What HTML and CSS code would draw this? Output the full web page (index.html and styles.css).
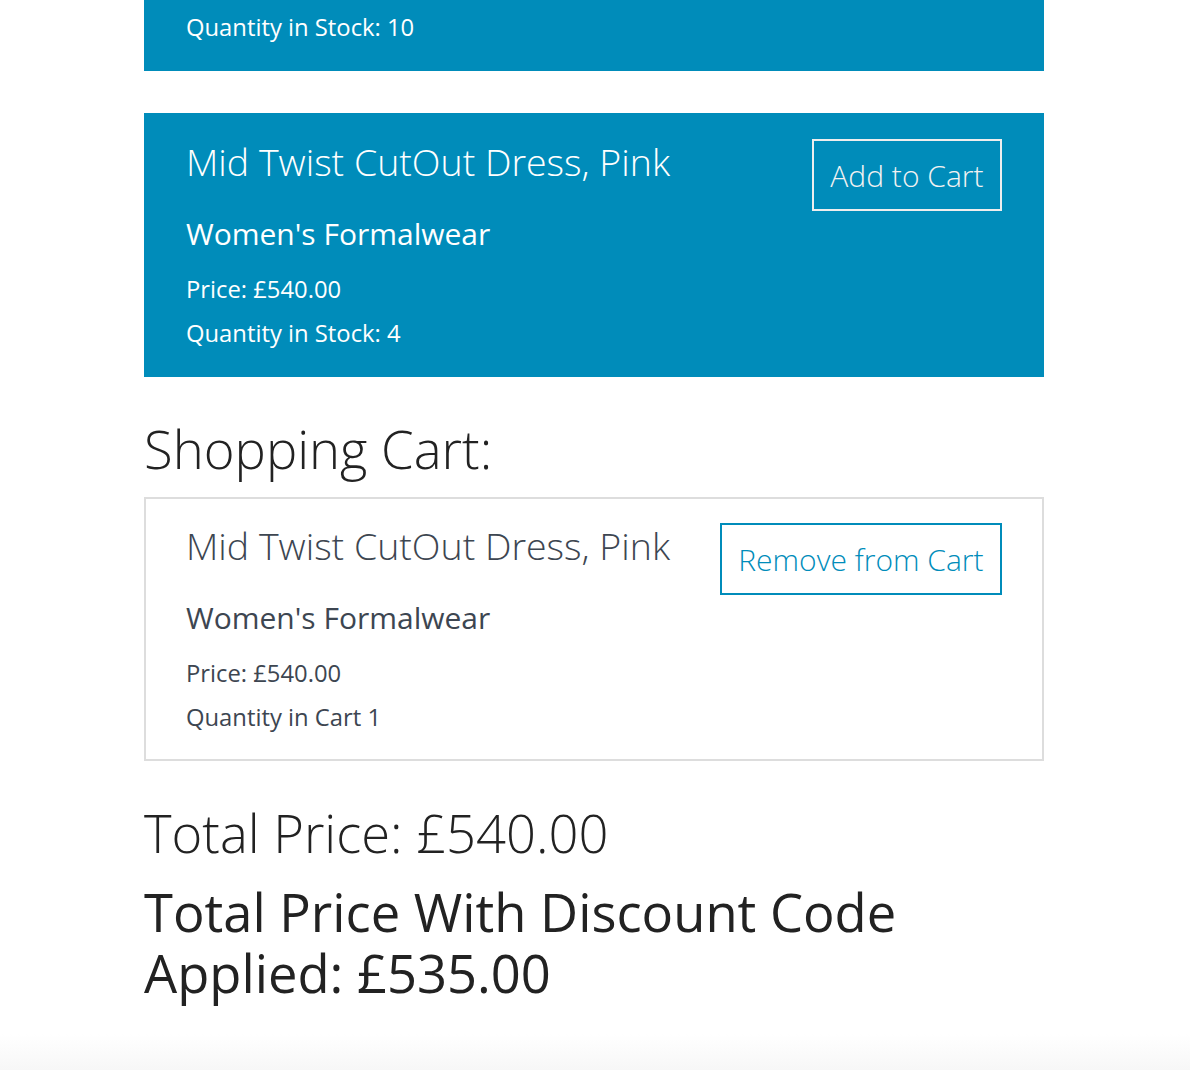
FILE: index.html
```html
<!DOCTYPE html>
<html lang="en">
<head>
<meta charset="utf-8">
<title>Shop</title>
<link rel="stylesheet" href="styles.css">
</head>
<body>
<main class="page">
  <section class="product product--stock">
    <div class="product__info">
      <h3 class="product__name">Frill Sleeve Blouse, Navy</h3>
      <h4 class="product__category">Women's Casualwear</h4>
      <p class="product__line">Price: £99.00</p>
      <p class="product__line">Quantity in Stock: 10</p>
    </div>
    <button class="btn btn--light">Add to Cart</button>
  </section>

  <section class="product product--stock">
    <div class="product__info">
      <h3 class="product__name">Mid Twist CutOut Dress, Pink</h3>
      <h4 class="product__category">Women's Formalwear</h4>
      <p class="product__line">Price: £540.00</p>
      <p class="product__line">Quantity in Stock: 4</p>
    </div>
    <button class="btn btn--light">Add to Cart</button>
  </section>

  <h2 class="heading">Shopping Cart:</h2>

  <section class="product product--cart">
    <div class="product__info">
      <h3 class="product__name">Mid Twist CutOut Dress, Pink</h3>
      <h4 class="product__category">Women's Formalwear</h4>
      <p class="product__line">Price: £540.00</p>
      <p class="product__line">Quantity in Cart 1</p>
    </div>
    <button class="btn btn--blue">Remove from Cart</button>
  </section>

  <h2 class="total">Total Price: £540.00</h2>
  <h2 class="total total--discount">Total Price With Discount Code Applied: £535.00</h2>
</main>
<div class="fade"></div>
</body>
</html>
```

FILE: styles.css
```css
html, body {
  margin: 0;
  padding: 0;
  background: #ffffff;
}

body {
  font-family: "Open Sans", "Liberation Sans", sans-serif;
  color: #222222;
  min-height: 1070px;
  position: relative;
  overflow: hidden;
}

.page {
  width: 900px;
  margin: -193px auto 0;
  display: flex;
  flex-direction: column;
  transform: translateX(-1px);
}

.product {
  display: flex;
  justify-content: space-between;
  align-items: flex-start;
  padding: 23px 42px 22px;
  box-sizing: border-box;
}

.product--stock {
  background: #008cba;
  color: #ffffff;
  margin-bottom: 42px;
}

.product--stock + .product--stock {
  margin-bottom: 41px;
}

.product--cart {
  border: 2px solid #dddddd;
  color: #3d4651;
  padding: 21px 40px 20px;
}

.product__name {
  font-weight: 300;
  font-size: 37.5px;
  line-height: 52px;
  margin: 0 0 26px;
}

.product__category {
  font-weight: 400;
  font-size: 30px;
  line-height: 40px;
  margin: 0 0 13px;
}

.product__line {
  font-size: 23.8px;
  line-height: 44px;
  margin: 0;
}

.btn {
  font-family: inherit;
  font-weight: 300;
  font-size: 30px;
  background: transparent;
  padding: 0 16.5px;
  height: 72px;
  margin-top: 3px;
  flex-shrink: 0;
}

.btn--light {
  border: 2px solid #eeeeee;
  color: #f2f2f2;
}

.btn--blue {
  border: 2px solid #008cba;
  color: #008cba;
}

.heading {
  font-weight: 300;
  font-size: 52.6px;
  line-height: 61px;
  margin: 0 0 18px;
  color: #222222;
}

.total {
  font-weight: 300;
  font-size: 52.5px;
  line-height: 61px;
  margin: 41px 0 0;
  color: #222222;
}

.total--discount {
  font-weight: 400;
  margin-top: 18px;
}

.fade {
  position: absolute;
  left: 0;
  right: 0;
  bottom: 0;
  height: 36px;
  background: linear-gradient(to bottom, #ffffff, #f7f7f7);
}
```
